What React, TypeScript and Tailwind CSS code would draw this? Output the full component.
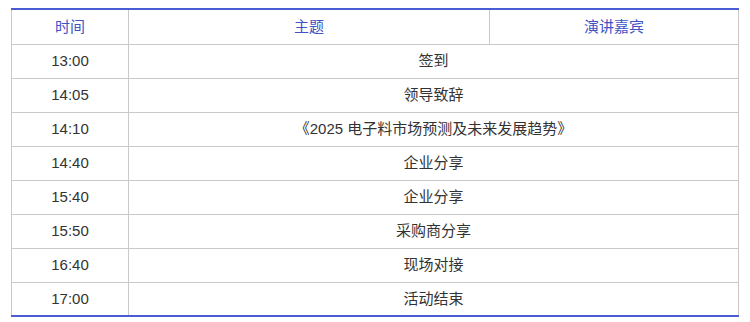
import React from "react";

const rows: [string, string][] = [
  ["13:00", "签到"],
  ["14:05", "领导致辞"],
  ["14:10", "《2025 电子料市场预测及未来发展趋势》"],
  ["14:40", "企业分享"],
  ["15:40", "企业分享"],
  ["15:50", "采购商分享"],
  ["16:40", "现场对接"],
  ["17:00", "活动结束"],
];

export default function App() {
  return (
    <div
      className="w-[750px] h-[322px] bg-white pt-[8px] pl-[11px]"
      style={{ fontFamily: '"Liberation Sans", "Noto Sans CJK SC", sans-serif' }}
    >
      <table className="w-[727px] border-collapse table-fixed text-[15px] text-[#333333]">
        <colgroup>
          <col className="w-[117px]" />
          <col className="w-[361px]" />
          <col className="w-[249px]" />
        </colgroup>
        <thead>
          <tr className="h-[35px] border-t-2 border-t-[#4a5bd4]">
            <th className="border-l border-r border-b border-[#c9c9c9] font-normal text-[#4052c4] text-center">时间</th>
            <th className="border-r border-b border-[#c9c9c9] font-normal text-[#4052c4] text-center">主题</th>
            <th className="border-r border-b border-[#c9c9c9] font-normal text-[#4052c4] text-center">演讲嘉宾</th>
          </tr>
        </thead>
        <tbody>
          {rows.map(([t, s], i) => (
            <tr
              key={i}
              className={
                i === rows.length - 1
                  ? "h-[34px] border-b-2 border-b-[#4a5bd4]"
                  : "h-[34px]"
              }
            >
              <td
                className={
                  i === rows.length - 1
                    ? "border-l border-r border-[#c9c9c9] text-center"
                    : "border-l border-r border-b border-[#c9c9c9] text-center"
                }
              >
                {t}
              </td>
              <td
                colSpan={2}
                className={
                  i === rows.length - 1
                    ? "border-r border-[#c9c9c9] text-center"
                    : "border-r border-b border-[#c9c9c9] text-center"
                }
              >
                {s}
              </td>
            </tr>
          ))}
        </tbody>
      </table>
    </div>
  );
}
